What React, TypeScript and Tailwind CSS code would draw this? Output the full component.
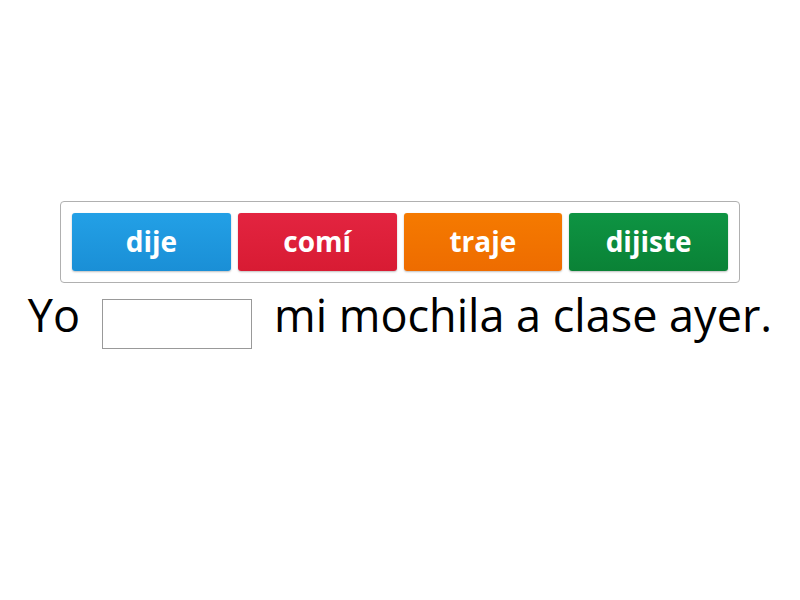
import React from "react";

const words = [
  { label: "dije", className: "bg-gradient-to-b from-[#23a0e6] to-[#1a8fd6]" },
  { label: "comí", className: "bg-gradient-to-b from-[#e32440] to-[#d81b33]" },
  { label: "traje", className: "bg-gradient-to-b from-[#f57a00] to-[#ee6c00]" },
  { label: "dijiste", className: "bg-gradient-to-b from-[#0e9443] to-[#0a8236]" },
];

export default function App() {
  return (
    <div className="flex h-[600px] w-[800px] flex-col items-center bg-white pt-[201px] font-['Open_Sans',sans-serif]">
      {/* Word bank */}
      <div className="flex w-[680px] gap-[7px] rounded-[4px] border border-[#b0b0b0] px-[11px] py-[11px]">
        {words.map((w) => (
          <div
            key={w.label}
            className={`flex h-[58px] w-[159px] items-center justify-center rounded-[3px] pb-[3px] text-[28px] font-bold text-white shadow-[0_1px_2px_rgba(0,0,0,0.25)] ${w.className}`}
          >
            {w.label}
          </div>
        ))}
      </div>

      {/* Sentence */}
      <div className="mt-[16px] flex items-start text-[45px] leading-[50px] text-black">
        <span className="-mt-[9px]">Yo</span>
        <div className="mx-[22px] h-[50px] w-[150px] border border-[#999]" />
        <span className="-mt-[9px]">mi mochila a clase ayer.</span>
      </div>
    </div>
  );
}
